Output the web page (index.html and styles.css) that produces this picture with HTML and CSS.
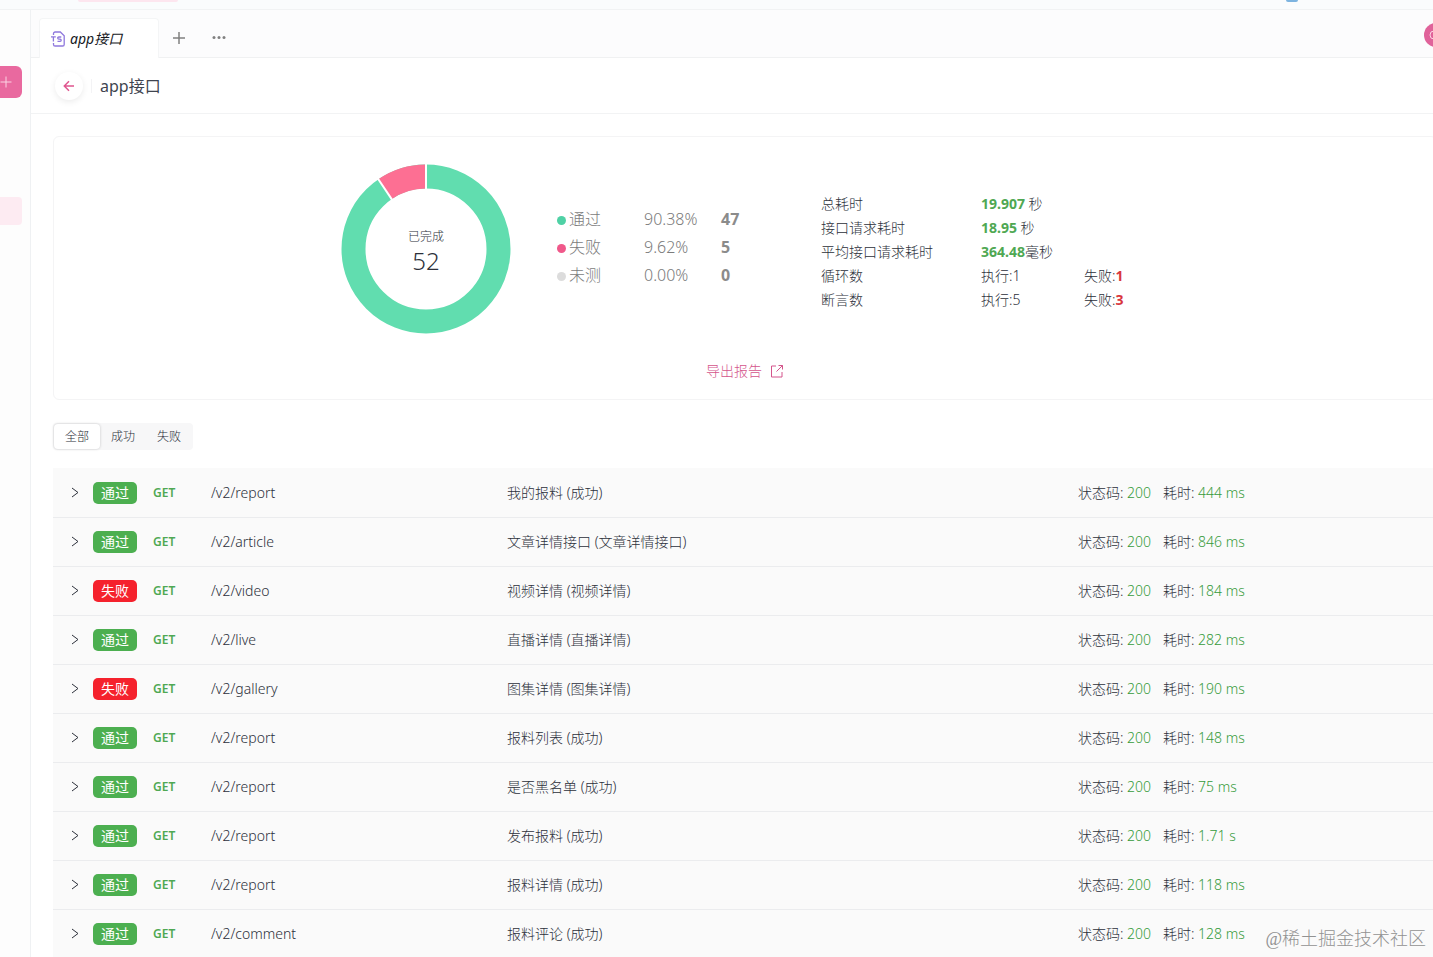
FILE: index.html
```
<!DOCTYPE html>
<html lang="zh-CN">
<head>
    <meta charset="UTF-8">
    <meta name="viewport" content="width=device-width, initial-scale=1.0">
    <title>app接口</title>
    <link rel="stylesheet" href="styles.css">
</head>
<body>

<header class="topbar">
    <span class="topbar-tag"></span>
    <span class="topbar-dot"></span>
</header>

<div class="layout">
    <aside class="sidebar">
        <button class="add-btn" aria-label="新建">
            <svg width="12" height="12" viewBox="0 0 12 12"><path d="M6 0.5v11M0.5 6h11"/></svg>
        </button>
        <div class="side-item"></div>
    </aside>

    <main class="main">
        <nav class="tabs">
            <a class="tab" href="#">
                <svg class="tab-icon" width="14" height="16" viewBox="0 0 14 16">
                    <path d="M2.5 4V2.6A1.6 1.6 0 0 1 4.100 1h5.200L13.200 4.800v8.600a1.600 1.600 0 0 1-1.600 1.600H4.100a1.600 1.600 0 0 1-1.600-1.600V12"/>
                    <path d="M0 5.800h4.800M2.400 5.800v4.800"/>
                    <path d="M10.300 6H7.800a1.100 1.100 0 0 0 0 2.200h1.300a1.100 1.100 0 0 1 0 2.200H6.500"/>
                </svg>
                <span>app接口</span>
            </a>
            <button class="tab-btn" aria-label="新标签">
                <svg width="12" height="12" viewBox="0 0 12 12"><path d="M6 0v12M0 6h12"/></svg>
            </button>
            <button class="tab-btn" aria-label="更多">
                <svg class="dots" width="14" height="4" viewBox="0 0 14 4"><circle cx="2" cy="1.500" r="1.500"/><circle cx="7" cy="1.500" r="1.500"/><circle cx="12" cy="1.500" r="1.500"/></svg>
            </button>
            <button class="round-btn" aria-label="搜索">
                <svg width="12" height="12" viewBox="0 0 12 12"><circle cx="5" cy="6" r="4"/></svg>
            </button>
        </nav>

        <div class="title-bar">
            <button class="back-btn" aria-label="返回">
                <svg width="12" height="12" viewBox="0 0 12 12"><path d="M11 6H1.500M6 1.300L1.300 6L6 10.700"/></svg>
            </button>
            <span class="divider"></span>
            <h1 class="title">app接口</h1>
        </div>

        <div class="content">
            <section class="card">
                <div class="summary">
                    <div class="donut">
                        <svg width="170" height="170" viewBox="0 0 170 170">
                            <circle class="seg-pass" cx="85" cy="85" r="72.500"/>
                            <circle class="seg-fail" cx="85" cy="85" r="72.500" pathLength="52" stroke-dasharray="5 47" transform="rotate(-124.600 85 85)"/>
                            <path class="seg-gap" d="M85 27V-1M52.500 37.900L36.500 14"/>
                        </svg>
                        <div class="donut-text">
                            <span>已完成</span>
                            <span class="donut-num">52</span>
                        </div>
                    </div>

                    <table class="legend">
                        <tr><td><i class="dot dot-pass"></i>通过</td><td>90.38%</td><th>47</th></tr>
                        <tr><td><i class="dot dot-fail"></i>失败</td><td>9.62%</td><th>5</th></tr>
                        <tr><td><i class="dot dot-none"></i>未测</td><td>0.00%</td><th>0</th></tr>
                    </table>

                    <table class="stats">
                        <tr><td>总耗时</td><td colspan="2"><b class="ok">19.907</b> 秒</td></tr>
                        <tr><td>接口请求耗时</td><td colspan="2"><b class="ok">18.95</b> 秒</td></tr>
                        <tr><td>平均接口请求耗时</td><td colspan="2"><b class="ok">364.48</b>毫秒</td></tr>
                        <tr><td>循环数</td><td>执行:1</td><td>失败:<b class="bad">1</b></td></tr>
                        <tr><td>断言数</td><td>执行:5</td><td>失败:<b class="bad">3</b></td></tr>
                    </table>
                </div>
                <a class="export" href="#">导出报告
                    <svg width="14" height="14" viewBox="0 0 14 14"><path d="M6 2H1.500v11H12V8M8.500 1.500H12.500v4M12.500 1.500L6.500 7.500"/></svg>
                </a>
            </section>

            <div class="filter">
                <button class="filter-btn active">全部</button>
                <button class="filter-btn">成功</button>
                <button class="filter-btn">失败</button>
            </div>

            <ul class="list" id="list"></ul>
        </div>
    </main>
</div>

<div class="watermark">@稀土掘金技术社区</div>

<script src="script.js"></script>
</body>
</html>
```

FILE: styles.css
```
* {
    box-sizing: border-box;
}
body {
    margin: 0;
    height: 100vh;
    display: flex;
    flex-direction: column;
    overflow: hidden;
    font-family: "Noto Sans", "Noto Sans CJK SC", sans-serif;
    font-size: 14px;
    font-weight: 300;
    line-height: 24px;
    color: #2c303a;
    background-color: #fff;
}
button {
    padding: 0;
    border: 0;
    background: none;
    font: inherit;
    color: inherit;
    cursor: pointer;
}
a {
    text-decoration: none;
}
svg {
    fill: none;
    stroke: currentColor;
}
b,
th {
    font-weight: 700;
}
.topbar {
    flex: none;
    height: 10px;
    padding: 0 135px 0 78px;
    display: flex;
    justify-content: space-between;
    background-color: #fafcfd;
    border-bottom: 1px solid #f1f3f4;
}
.topbar-tag {
    width: 100px;
    height: 2px;
    border-radius: 0 0 4px 4px;
    background-color: #fde6ef;
}
.topbar-dot {
    width: 12px;
    height: 2px;
    border-radius: 0 0 6px 6px;
    background-color: #7db4e0;
}
.layout {
    flex: 1;
    min-height: 0;
    display: flex;
}
.sidebar {
    flex: none;
    width: 31px;
    padding-top: 56px;
    background-color: #fdfdfd;
    border-right: 1px solid #eff1f3;
}
.add-btn {
    display: flex;
    align-items: center;
    width: 22px;
    height: 32px;
    border-radius: 0 6px 6px 0;
    color: #fbd3e3;
    background-color: #e9699f;
}
.side-item {
    width: 22px;
    height: 28px;
    margin-top: 99px;
    border-radius: 0 4px 4px 0;
    background-color: #fdebf2;
}
.main {
    flex: 1;
    min-width: 0;
    overflow: hidden;
}
.tabs {
    display: flex;
    align-items: flex-end;
    height: 48px;
    padding-left: 8px;
    background-color: #fcfcfd;
    border-bottom: 1px solid #f0f1f2;
}
.tab {
    display: flex;
    align-items: center;
    gap: 5px;
    width: 120px;
    height: 40px;
    margin-bottom: -1px;
    padding-left: 11px;
    border: 1px solid #f4f5f6;
    border-bottom: 0;
    border-radius: 4px 4px 0 0;
    font-style: italic;
    font-weight: 400;
    color: #16181d;
    background-color: #fff;
}
.tab-icon {
    color: #8f78dd;
    stroke-width: 1.3;
}
.tab-btn {
    display: flex;
    align-items: center;
    justify-content: center;
    width: 40px;
    height: 39px;
    color: #808080;
    stroke-width: 1.5;
}
.dots {
    fill: currentColor;
    stroke: none;
}
.round-btn {
    display: flex;
    align-items: center;
    flex: none;
    width: 24px;
    height: 24px;
    margin: 0 -15px 10px auto;
    padding-left: 5px;
    border-radius: 50%;
    color: #fbd3e3;
    background-color: #e0629a;
}
.title-bar {
    display: flex;
    align-items: center;
    gap: 8px;
    height: 56px;
    padding-left: 24px;
    border-bottom: 1px solid #f2f3f4;
}
.back-btn {
    display: flex;
    align-items: center;
    justify-content: center;
    width: 28px;
    height: 28px;
    border-radius: 50%;
    color: #e0568f;
    stroke-width: 1.5;
    box-shadow: 0 2px 6px rgba(0,0,0,0.08);
}
.divider {
    width: 1px;
    height: 14px;
    background-color: #f3f3f5;
}
.title {
    margin: 0;
    font-size: 16px;
    font-weight: 400;
    color: #40444f;
}
.content {
    margin-right: -4px;
    padding: 22px 0 0 22px;
}
.card {
    display: flex;
    flex-direction: column;
    align-items: center;
    padding: 27px 0 16px;
    border: 1px solid #f4f4f5;
    border-radius: 6px;
}
.summary {
    display: flex;
    align-items: center;
    margin-bottom: 25px;
}
.donut {
    display: grid;
    place-items: center;
    margin-right: 46px;
}
.donut svg,
.donut-text {
    grid-area: 1 / 1;
}
.seg-pass {
    stroke: #61ddaf;
    stroke-width: 24;
}
.seg-fail {
    stroke: #fd6f93;
    stroke-width: 24;
}
.seg-gap {
    stroke: #fff;
    stroke-width: 2;
}
.donut-text {
    display: flex;
    flex-direction: column;
    align-items: center;
    font-size: 12px;
}
.donut-num {
    font-size: 24px;
}
table {
    border-collapse: collapse;
}
td,
th {
    padding: 0;
    text-align: left;
}
.legend {
    width: 264px;
    margin-bottom: 4px;
    font-size: 16px;
    line-height: 28px;
    color: #7c7c7c;
}
.legend td:first-child {
    width: 87px;
}
.legend td:nth-child(2) {
    width: 77px;
}
.legend th {
    color: #8b8b8b;
}
.dot {
    display: inline-block;
    width: 9px;
    height: 9px;
    margin-right: 3px;
    border-radius: 50%;
}
.dot-pass {
    background-color: #4fd1a5;
}
.dot-fail {
    background-color: #f0588a;
}
.dot-none {
    background-color: #dcdcdc;
}
.stats {
    width: 328px;
    margin-top: 6px;
}
.stats td:first-child {
    width: 160px;
}
.stats td:nth-child(2) {
    width: 103px;
}
.ok {
    color: #4fa853;
}
.bad {
    color: #d9363e;
}
.export {
    display: flex;
    align-items: center;
    gap: 8px;
    color: #d4558c;
}
.filter {
    display: flex;
    width: fit-content;
    margin: 23px 0 18px;
    padding: 1px;
    border-radius: 4px;
    background-color: #f7f7f8;
}
.filter-btn {
    width: 46px;
    height: 25px;
    border-radius: 4px;
    font-size: 12px;
}
.filter-btn.active {
    background-color: #fff;
    box-shadow: 0 0 3px rgba(0,0,0,0.2);
}
.list {
    margin: 0;
    padding: 1px 0 0;
    list-style: none;
    background-color: #fafafa;
}
.row {
    display: grid;
    grid-template-columns: 24px 60px 58px 296fr 571fr 359fr;
    align-items: center;
    height: 49px;
    padding-left: 16px;
    border-bottom: 1px solid #ebecee;
}
.expand {
    display: flex;
    width: 12px;
    height: 12px;
}
.tag {
    width: 44px;
    height: 22px;
    border-radius: 5px;
    line-height: 22px;
    text-align: center;
    font-weight: 400;
    color: #fff;
}
.tag-pass {
    background-color: #4caf50;
}
.tag-fail {
    background-color: #f5222d;
}
.method {
    font-size: 12px;
    font-weight: 600;
    color: #4fa853;
}
.result {
    display: flex;
    gap: 12px;
}
.value {
    color: #369a3b;
}
.watermark {
    position: absolute;
    right: 7px;
    bottom: 6px;
    font-family: "Liberation Serif", "Noto Sans CJK SC", serif;
    font-size: 18px;
    color: #929292;
}
```

FILE: script.js
```
const rows = [
    [true, '/v2/report', '我的报料 (成功)', '444 ms'],
    [true, '/v2/article', '文章详情接口 (文章详情接口)', '846 ms'],
    [false, '/v2/video', '视频详情 (视频详情)', '184 ms'],
    [true, '/v2/live', '直播详情 (直播详情)', '282 ms'],
    [false, '/v2/gallery', '图集详情 (图集详情)', '190 ms'],
    [true, '/v2/report', '报料列表 (成功)', '148 ms'],
    [true, '/v2/report', '是否黑名单 (成功)', '75 ms'],
    [true, '/v2/report', '发布报料 (成功)', '1.71 s'],
    [true, '/v2/report', '报料详情 (成功)', '118 ms'],
    [true, '/v2/comment', '报料评论 (成功)', '128 ms']
];

document.getElementById('list').innerHTML = rows.map(([pass, path, name, time]) => `
    <li class="row">
        <button class="expand" aria-label="展开">
            <svg width="12" height="12" viewBox="0 0 12 12"><path d="M3 1l6 4.500l-6 4.500"/></svg>
        </button>
        <span class="tag ${pass ? 'tag-pass' : 'tag-fail'}">${pass ? '通过' : '失败'}</span>
        <span class="method">GET</span>
        <span>${path}</span>
        <span>${name}</span>
        <span class="result">
            <span>状态码: <span class="value">200</span></span>
            <span>耗时: <span class="value">${time}</span></span>
        </span>
    </li>`).join('');
```
